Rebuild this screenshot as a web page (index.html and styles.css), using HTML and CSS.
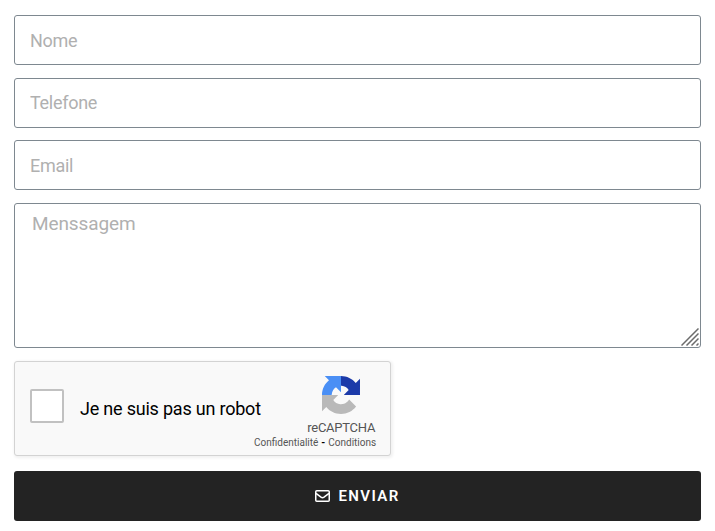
FILE: index.html
```html
<!DOCTYPE html>
<html lang="pt">
<head>
<meta charset="utf-8">
<title>Contato</title>
<link rel="stylesheet" href="styles.css">
</head>
<body>
<form class="form">
  <input class="field" type="text" placeholder="Nome">
  <input class="field field-phone" type="tel" placeholder="Telefone">
  <input class="field" type="email" placeholder="Email">
  <div class="message">
    <textarea class="field field-message" placeholder="Menssagem"></textarea>
    <svg class="grip" viewBox="0 0 18 18"><path d="M.5 17.5l17-17M5.5 17.5l12-12M10.500 17.5l7-7M15.500 17.5l2-2"/></svg>
  </div>
  <div class="captcha">
    <span class="checkbox"></span>
    <span class="captcha-label">Je ne suis pas un robot</span>
    <div class="brand">
      <svg class="logo" viewBox="0 0 64 64">
        <defs>
          <clipPath id="left"><path d="M0 0h32v32H0z"/></clipPath>
          <clipPath id="right"><path d="M32 0h32v32H32z"/></clipPath>
        </defs>
        <path fill="#1c3aa9" clip-path="url(#right)" d="M64 31.955l-.033-1.37V4.687l-7.16 7.16C50.904 4.674 41.975.093 31.99.093c-10.4 0-19.622 4.96-25.458 12.64l11.736 11.86a15.55 15.55 0 0 1 4.754-5.334c2.05-1.6 4.952-2.906 8.968-2.906.485 0 .86.057 1.135.163 4.976.393 9.288 3.14 11.828 7.124l-8.307 8.307z"/>
        <path fill="#4a8ff5" clip-path="url(#left)" d="M32 .094H4.594l7.16 7.16C4.58 13.147 0 22.075 0 32.06h16.260c0-.485.057-.86.163-1.135.393-4.976 3.14-9.288 7.124-11.828L32 27.400z"/>
        <path fill="#b9b9b9" d="M.001 32.045l.033 1.37v25.898l7.16-7.16c5.86 7.173 14.774 11.754 24.76 11.754 10.4 0 19.622-4.96 25.458-12.64l-11.736-11.86a15.55 15.55 0 0 1-4.754 5.334c-2.05 1.6-4.952 2.906-8.968 2.906-.485 0-.86-.057-1.135-.163-4.976-.393-9.288-3.14-11.828-7.124l8.307-8.307z"/>
      </svg>
      <div class="brand-name">reCAPTCHA</div>
      <div class="links"><span>Confidentialité</span><b>-</b><span>Conditions</span></div>
    </div>
  </div>
  <button class="submit" type="button">
    <svg class="mail" viewBox="0 0 15 12"><rect x=".75" y=".75" width="13.500" height="10.500" rx="1"/><path d="M1 3.300l5 3.900q1.500 1.100 3 0l5-3.900"/></svg>
    <span>ENVIAR</span>
  </button>
</form>
</body>
</html>
```

FILE: styles.css
```css
* { box-sizing: border-box; }
body { margin: 0; background: #fff; font-family: Roboto, sans-serif; }
.form { display: flex; flex-direction: column; padding: 15px 14px 10px; }
.field {
  display: block;
  width: 100%;
  height: 50px;
  margin: 0 0 13px;
  padding: 0 15px;
  border: 1px solid #7e8890;
  border-radius: 3px;
  background: #fff;
  font: 400 18px Roboto, sans-serif;
  letter-spacing: -0.28px;
  outline: 0;
}
.field-phone { margin-bottom: 12px; padding-bottom: 2px; }
.field::placeholder { color: #b0b0b0; opacity: 1; }
.message { position: relative; margin-bottom: 13px; }
.field-message {
  height: 145px;
  margin: 0;
  padding: 8px 17px;
  font-size: 19px;
  line-height: 23px;
  letter-spacing: -0.1px;
  resize: none;
}
.grip { position: absolute; right: 2px; bottom: 2px; width: 18px; height: 18px; fill: none; stroke: #6c6c6c; stroke-width: 1.5; }
.captcha {
  display: flex;
  width: 377px;
  height: 95px;
  margin-bottom: 15px;
  padding: 0 14px 0 15px;
  border: 1px solid #d3d3d3;
  border-radius: 3px;
  background: #f9f9f9;
  box-shadow: 1px 1px 3px 1px rgba(0, 0, 0, 0.06);
}
.checkbox { flex: none; width: 34px; height: 34px; margin-top: 27px; border: 2px solid #c1c1c1; border-radius: 2px; background: #fff; }
.captcha-label { flex: none; width: 174px; margin: 35px 0 0 16px; font-size: 18px; line-height: 24px; letter-spacing: -0.21px; white-space: nowrap; }
.brand { display: flex; flex: 1; flex-direction: column; align-items: flex-end; color: #555; }
.logo { width: 38px; height: 38px; margin: 14px 16px 0 0; }
.brand-name { margin: 6px 1px 0 0; font-size: 13px; line-height: 16px; letter-spacing: -0.25px; }
.links { display: flex; gap: 3px; font-size: 10px; line-height: 13px; white-space: nowrap; }
.links b { color: #000; }
.submit {
  display: flex;
  align-items: center;
  justify-content: center;
  gap: 8px;
  height: 50px;
  padding: 0;
  border: 0;
  border-radius: 3px;
  background: #232323;
  color: #fff;
  font: 600 15px Roboto, sans-serif;
  letter-spacing: 1.4px;
}
.mail { width: 15px; height: 12px; fill: none; stroke: #fff; stroke-width: 1.5; }
```
